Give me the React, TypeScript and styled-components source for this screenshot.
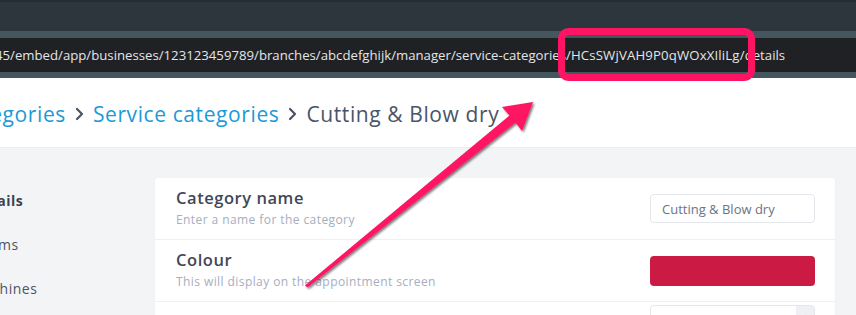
import React from "react";
import styled, { createGlobalStyle } from "styled-components";

const Global = createGlobalStyle`
  html, body { margin: 0; padding: 0; background: #f3f4f6; overflow: hidden; }
  body { width: 856px; height: 315px; }
  * { box-sizing: border-box; }
`;

const Root = styled.div`
  position: relative;
  width: 856px;
  height: 315px;
  overflow: hidden;
  font-family: "Open Sans", "Noto Sans", sans-serif;
`;

const TitleBar = styled.div`
  height: 31px;
  background: #2d363d;
  border-top: 2px solid #262d32;
`;

const Toolbar = styled.div`
  background: #46565e;
  padding: 7px 0 6px 0;
`;

const UrlBar = styled.div`
  height: 34px;
  background: #202124;
  display: flex;
  align-items: center;
  white-space: nowrap;
  color: #e3e5e8;
  font-family: "Open Sans", "Noto Sans", sans-serif;
  font-size: 13.2px;
`;

const UrlText = styled.span`
  margin-left: -5px;
`;

const Highlight = styled.span`
  position: relative;
  display: inline-block;
  letter-spacing: 0.15px;
  &::after {
    content: "";
    position: absolute;
    left: -8px;
    right: -10px;
    top: -18px;
    bottom: -17px;
    border: 7px solid #ff1464;
    border-radius: 11px;
  }
`;

const Header = styled.div`
  height: 70px;
  background: #ffffff;
  display: flex;
  align-items: center;
  padding-top: 2px;
  border-bottom: 1px solid #eceef1;
  white-space: nowrap;
  overflow: hidden;
`;

const Crumbs = styled.div`
  display: flex;
  align-items: center;
  gap: 8px;
  margin-left: -44px;
  font-size: 21px;
  font-weight: 500;
  letter-spacing: 0.6px;
`;

const Crumb = styled.span<{ $current?: boolean }>`
  color: ${(p) => (p.$current ? "#4a5468" : "#1b9ad6")};
`;

const Chevron = styled.svg`
  width: 9px;
  height: 14px;
  flex: none;
  margin: 0 1px;
`;

const Main = styled.div`
  display: flex;
  align-items: flex-start;
  background: #f3f4f6;
`;

const Sidebar = styled.nav`
  width: 155px;
  flex: none;
  display: flex;
  flex-direction: column;
  padding-top: 43px;
  gap: 25px;
  overflow: hidden;
`;

const NavItem = styled.span<{ $active?: boolean }>`
  display: block;
  margin-left: -29px;
  height: 19px;
  line-height: 19px;
  font-size: 14px;
  letter-spacing: 0.5px;
  white-space: nowrap;
  font-weight: ${(p) => (p.$active ? 700 : 400)};
  color: ${(p) => (p.$active ? "#3b4252" : "#4b5466")};
`;

const Card = styled.section`
  width: 680px;
  margin-top: 30px;
  background: #ffffff;
  border-radius: 4px;
  box-shadow: 0 1px 2px rgba(30, 40, 60, 0.06);
`;

const Row = styled.div<{ $top?: boolean }>`
  display: flex;
  align-items: ${(p) => (p.$top ? "flex-start" : "center")};
  justify-content: space-between;
  padding: ${(p) => (p.$top ? "3px 20px 10px 21px" : "10px 20px 10px 21px")};
  border-bottom: 1px solid #eef0f3;
  min-height: 61px;
`;

const RowText = styled.div<{ $pad?: boolean }>`
  display: flex;
  flex-direction: column;
  gap: 3px;
  padding-top: ${(p) => (p.$pad ? "7px" : "0")};
`;

const Title = styled.div`
  font-size: 16.5px;
  line-height: 20px;
  font-weight: 600;
  color: #3f4759;
  letter-spacing: 0.55px;
`;

const Sub = styled.div`
  font-size: 12px;
  line-height: 18px;
  color: #a6aec0;
  letter-spacing: 0.42px;
`;

const Input = styled.div`
  width: 165px;
  height: 29px;
  border: 1px solid #e3e6eb;
  border-radius: 4px;
  display: flex;
  align-items: center;
  padding-left: 11px;
  font-size: 13px;
  color: #6b7384;
  white-space: nowrap;
`;

const Swatch = styled.div<{ $color: string }>`
  width: 165px;
  height: 30px;
  border-radius: 4px;
  background: ${(p) => p.$color};
`;

const Select = styled.div`
  width: 165px;
  height: 30px;
  border: 1px solid #e3e6eb;
  border-radius: 4px;
  display: flex;
  overflow: hidden;
  font-size: 13px;
  color: #6b7384;
`;

const SelectValue = styled.div`
  flex: 1;
  padding: 7px 0 0 11px;
  white-space: nowrap;
`;

const SelectButton = styled.div`
  width: 18px;
  background: #eef0f3;
  display: flex;
  justify-content: center;
  padding-top: 5px;
  font-size: 11px;
  color: #777;
`;

const Overlay = styled.svg`
  position: absolute;
  left: 0;
  top: 0;
  pointer-events: none;
`;

const ChevronIcon = () => (
  <Chevron viewBox="0 0 9 14">
    <path d="M2 2 L7 7 L2 12" fill="none" stroke="#4b5263" strokeWidth="2.2" strokeLinecap="round" strokeLinejoin="round" />
  </Chevron>
);

export default function App() {
  return (
    <Root>
      <Global />
      <TitleBar />
      <Toolbar>
        <UrlBar>
          <UrlText>
            45/embed/app/businesses/123123459789/branches/abcdefghijk/manager/service-categories
            <Highlight>/HCsSWjVAH9P0qWOxXIliLg/</Highlight>
            details
          </UrlText>
        </UrlBar>
      </Toolbar>
      <Header>
        <Crumbs>
          <Crumb>Categories</Crumb>
          <ChevronIcon />
          <Crumb>Service categories</Crumb>
          <ChevronIcon />
          <Crumb $current>Cutting &amp; Blow dry</Crumb>
        </Crumbs>
      </Header>
      <Main>
        <Sidebar>
          <NavItem $active>Details</NavItem>
          <NavItem>Rooms</NavItem>
          <NavItem>Machines</NavItem>
        </Sidebar>
        <Card>
          <Row>
            <RowText>
              <Title>Category name</Title>
              <Sub>Enter a name for the category</Sub>
            </RowText>
            <Input>Cutting &amp; Blow dry</Input>
          </Row>
          <Row>
            <RowText>
              <Title>Colour</Title>
              <Sub>This will display on the appointment screen</Sub>
            </RowText>
            <Swatch $color="#cb1a44" />
          </Row>
          <Row $top>
            <RowText $pad>
              <Title>Parent category</Title>
              <Sub>Choose where this category appears</Sub>
            </RowText>
            <Select>
              <SelectValue>Hair and Blow dry</SelectValue>
              <SelectButton>⬍</SelectButton>
            </Select>
          </Row>
        </Card>
      </Main>
      <Overlay width="856" height="315" viewBox="0 0 856 315">
        <defs>
          <filter id="sh" x="-10%" y="-10%" width="130%" height="130%">
            <feDropShadow dx="1.5" dy="1.5" stdDeviation="1.2" floodColor="#000" floodOpacity="0.55" />
          </filter>
        </defs>
        <polygon
          filter="url(#sh)"
          fill="#ff1464"
          points="305,285.5 509.5,115.5 502,107 533,102 522,131 515.5,122.5 307.5,287.5"
        />
      </Overlay>
    </Root>
  );
}
